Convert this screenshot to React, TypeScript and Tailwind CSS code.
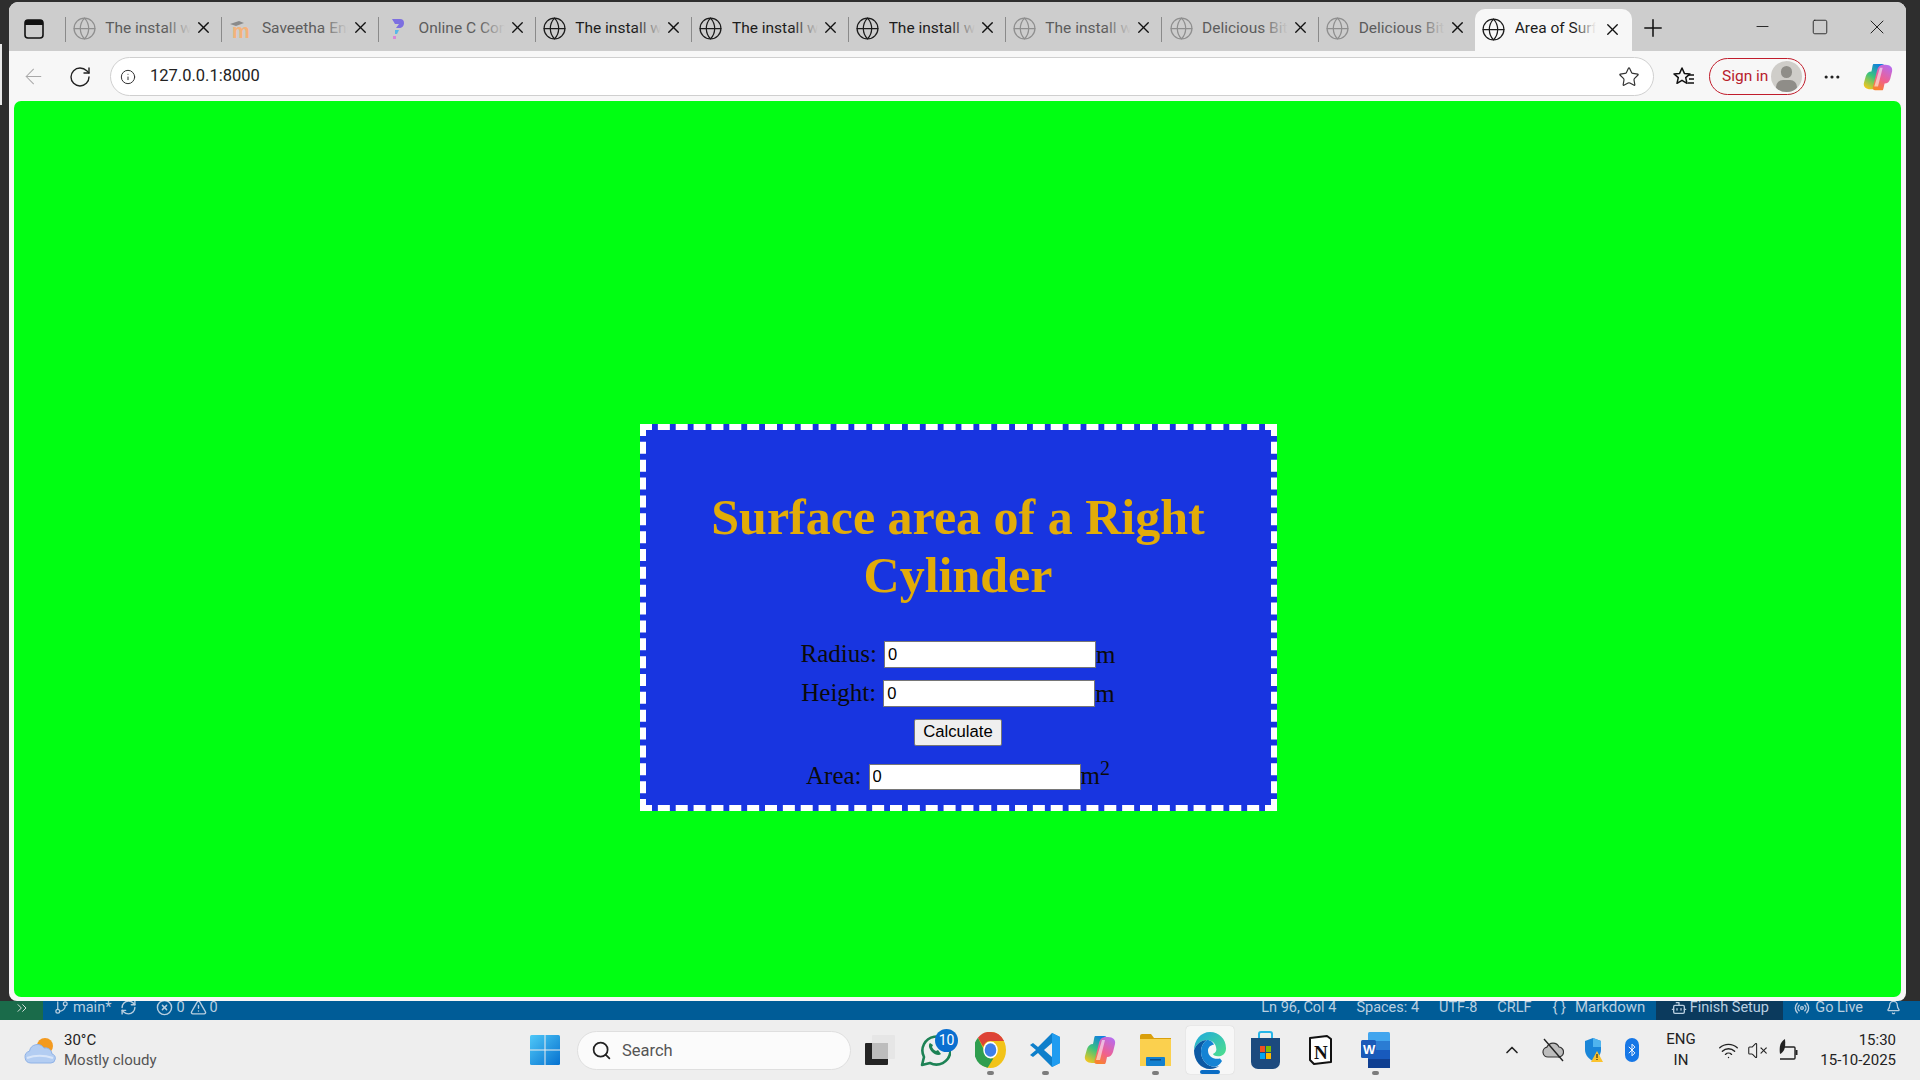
import { Bell, Bot, ChevronUp, Globe, Minus, Plus, RotateCw, Search, Square, Star, Wifi, X, ArrowLeft, Info, MoreHorizontal, VolumeX, Bluetooth, GitBranch, RefreshCw, CircleX, TriangleAlert, Radio, ChevronsRight } from "lucide-react"

const ui = "font-['Roboto',sans-serif]"

interface TabProps {
  title: string
  dim?: boolean
  icon?: "globe" | "moodle" | "compiler"
}

function Tab({ title, dim, icon = "globe" }: TabProps) {
  return (
    <div className="relative flex h-[49px] w-[156.7px] shrink-0 items-center pr-[8px] pt-[5px]">
      <div className="h-[25px] w-px bg-[#8a8a8a]" />
      <div className="-mt-[1px] flex w-[38px] shrink-0 justify-center">
        {icon === "globe" && (
          <Globe size={25} strokeWidth={1.2} className={dim ? "text-[#8f8f8f]" : "text-[#1c1c1c]"} />
        )}
        {icon === "moodle" && <MoodleIcon />}
        {icon === "compiler" && <CompilerIcon />}
      </div>
      <div className="relative -mt-[1px] ml-[2px] w-[86px] shrink-0 overflow-hidden">
        <span className={`block whitespace-nowrap text-[15.5px] ${dim ? "text-[#5c5c5c]" : "text-[#1c1c1c]"}`}>{title}</span>
        <div className="absolute inset-y-0 right-0 w-[26px] bg-gradient-to-r from-transparent to-[#cdcdcd]" />
      </div>
      <X size={19} strokeWidth={1.7} className="-mt-[3px] ml-[3px] shrink-0 text-[#111]" />
    </div>
  )
}

function MoodleIcon() {
  return (
    <svg width="24" height="20" viewBox="0 0 24 20">
      <path d="M1 5l9-3 5 2-8 3z" fill="#8a8a8a" />
      <text x="3" y="19" fontSize="20" fontFamily="Liberation Sans, sans-serif" fontWeight="700" fill="#f3b27a">m</text>
    </svg>
  )
}

function CompilerIcon() {
  return (
    <svg width="16" height="24" viewBox="0 0 16 24">
      <path d="M2 2h8a4 4 0 0 1 4 4c0 3-2 5-5 5H6l3-4H5z" fill="#7d6fe0" />
      <path d="M5 13h4l-2 4H5z" fill="#58b8e8" />
      <path d="M3 19h3v3H3z" fill="#d886d8" />
    </svg>
  )
}

function SidebarIcon() {
  return (
    <svg width="20" height="20" viewBox="0 0 20 20">
      <rect x="1" y="1" width="18" height="18" rx="3" fill="none" stroke="#111" strokeWidth="1.6" />
      <path d="M1 4a3 3 0 0 1 3-3h12a3 3 0 0 1 3 3v2H1z" fill="#111" />
    </svg>
  )
}

function FavoritesIcon() {
  return (
    <svg width="22" height="22" viewBox="0 0 22 22">
      <path d="M9 2l2.4 5.4 5.6.5-4.3 3.7 1.3 5.7L9 14.3l-5 3 1.3-5.7L1 7.9l5.6-.5z" fill="none" stroke="#111" strokeWidth="1.5" strokeLinejoin="round" />
      <path d="M15 9h6M16 13h5M15 17h6" stroke="#111" strokeWidth="1.3" />
    </svg>
  )
}

function CopilotIcon({ size }: { size: number }) {
  return (
    <svg width={size} height={size} viewBox="0 0 32 32">
      <defs>
        <linearGradient id={`cpa${size}`} x1="0.2" y1="1" x2="0.7" y2="0">
          <stop offset="0" stopColor="#f6c61e" />
          <stop offset="0.5" stopColor="#3cc47c" />
          <stop offset="1" stopColor="#0f7fe0" />
        </linearGradient>
        <linearGradient id={`cpb${size}`} x1="0.8" y1="0" x2="0.3" y2="1">
          <stop offset="0" stopColor="#b66cf0" />
          <stop offset="0.6" stopColor="#f0608f" />
          <stop offset="1" stopColor="#f9822e" />
        </linearGradient>
      </defs>
      <path d="M11 2h9c2 0 3 1 2.5 3L18 23c-1 4-3 6-7 6H8c-5 0-8-3-7-7l2-7c1-3 3-5 6-5 1-4 1-7 2-8z" fill={`url(#cpa${size})`} />
      <path d="M21 30h-8c-2 0-3-1-2.5-3L15 9c1-4 3-6 7-6h2c5 0 8 3 7 7l-2 8c-1 3-3 5-6 5-1 4-1 6-2 7z" fill={`url(#cpb${size})`} />
      <path d="M18 6h3l-5 20h-4z" fill="#fff" fillOpacity="0.55" />
    </svg>
  )
}

function WeatherIcon() {
  return (
    <svg width="32" height="27" viewBox="0 0 32 27">
      <circle cx="21" cy="9" r="8" fill="#f39a1f" />
      <path d="M7 26a6 6 0 0 1-1.5-11.8A8 8 0 0 1 20 11a6.5 6.5 0 0 1 8 6 4.6 4.6 0 0 1-1 9z" fill="#b3cdf2" stroke="#8fb2e6" strokeWidth="1" />
      <path d="M3 21c8-3 17-3 26 0" fill="none" stroke="#d9e6f9" strokeWidth="2" />
    </svg>
  )
}

function WindowsLogo() {
  return (
    <svg width="30" height="30" viewBox="0 0 30 30">
      <defs>
        <linearGradient id="win" x1="0" y1="0" x2="1" y2="1">
          <stop offset="0" stopColor="#4fc8f8" />
          <stop offset="1" stopColor="#0671cf" />
        </linearGradient>
      </defs>
      <rect width="30" height="30" rx="1.5" fill="url(#win)" />
      <path d="M14.5 0h1v30h-1zM0 14.5h30v1H0z" fill="#eee" />
    </svg>
  )
}

function TaskViewIcon() {
  return (
    <svg width="30" height="30" viewBox="0 0 30 30">
      <rect x="0" y="8" width="23" height="22" rx="1" fill="#242424" />
      <rect x="7" y="0" width="23" height="24" rx="1" fill="#e6e6e6" />
      <rect x="7" y="8" width="16" height="16" fill="#bdbdbd" />
    </svg>
  )
}

function WhatsAppIcon() {
  return (
    <svg width="32" height="34" viewBox="0 0 32 34">
      <path d="M3 32l2-8A14 14 0 1 1 11 30z" fill="#eeeeee" stroke="#1d8255" strokeWidth="2.6" strokeLinejoin="round" />
      <path d="M11 10c-2 2-1 6 2 9s7 4 9 2l-3-4-2 1c-2-1-3-2-4-4l1-2z" fill="#1d8255" />
    </svg>
  )
}

function ChromeIcon() {
  return (
    <svg width="31" height="36" viewBox="0 0 32 32" preserveAspectRatio="none">
      <circle cx="16" cy="16" r="16" fill="#f2c318" />
      <path d="M16 0a16 16 0 0 1 14 8H16a8 8 0 0 0-7.5 5L3 5A16 16 0 0 1 16 0z" fill="#dd4337" />
      <path d="M3 5l7 12a8 8 0 0 0 9 6.5L13 31.7A16 16 0 0 1 3 5z" fill="#2f9e4f" />
      <circle cx="16" cy="16" r="7.5" fill="#fff" />
      <circle cx="16" cy="16" r="6" fill="#3f7fe8" />
    </svg>
  )
}

function VsCodeIcon() {
  return (
    <svg width="32" height="36" viewBox="0 0 32 36">
      <path d="M23 1l8 4v26l-8 4L9 21l-5 4-3-2 6-5-6-5 3-2 5 4z" fill="#0e7fcb" />
      <path d="M23 1l8 4v26l-8 4z" fill="#1f9cf0" />
      <path d="M23 11l-8 7 8 7z" fill="#eeeeee" />
    </svg>
  )
}

function FolderIcon() {
  return (
    <svg width="31" height="32" viewBox="0 0 31 32">
      <path d="M0 2a2 2 0 0 1 2-2h9l3 4h17v8H0z" fill="#d99f0c" />
      <path d="M0 5h31v27H0z" fill="#fbd04e" />
      <rect x="6" y="23" width="19" height="9" rx="1" fill="#1380cf" />
      <rect x="10" y="25" width="11" height="1.5" fill="#0b4f8a" />
    </svg>
  )
}

function EdgeIcon() {
  return (
    <svg width="32" height="37" viewBox="0 0 32 32" preserveAspectRatio="none">
      <defs>
        <linearGradient id="edgea" x1="0" y1="0" x2="1" y2="1">
          <stop offset="0" stopColor="#1fa8e0" />
          <stop offset="1" stopColor="#4fe08a" />
        </linearGradient>
      </defs>
      <path d="M16 0c9 0 16 6 16 14 0 5-4 7-8 7-3 0-5-1-5-2 3-1 4-3 3-6-1-4-5-6-9-6C7 7 2 11 0 16 0 7 7 0 16 0z" fill="url(#edgea)" />
      <path d="M0 16c2-5 7-9 13-9-4 2-6 6-6 10 0 7 6 13 14 13 2 0 3 0 5-1-3 2-6 3-10 3C7 32 0 25 0 16z" fill="#0c59a4" />
      <path d="M7 17c0-4 2-8 6-10 4 0 6 2 7 4-3 0-6 2-6 5 0 5 5 8 12 7l2 2c-2 3-4 4-7 5-8 0-14-6-14-13z" fill="#1483d4" />
    </svg>
  )
}

function StoreIcon() {
  return (
    <svg width="29" height="38" viewBox="0 0 29 38">
      <path d="M8 8V3a2 2 0 0 1 2-2h9a2 2 0 0 1 2 2v5" fill="none" stroke="#27b5e8" strokeWidth="2" />
      <path d="M0 7h29v24a7 7 0 0 1-7 7H7a7 7 0 0 1-7-7z" fill="#1c4a7e" />
      <rect x="9" y="15" width="5" height="6" fill="#f05022" />
      <rect x="15" y="15" width="5" height="6" fill="#7fba00" />
      <rect x="9" y="22" width="5" height="6" fill="#00a4ef" />
      <rect x="15" y="22" width="5" height="6" fill="#ffb900" />
    </svg>
  )
}

function NotionIcon() {
  return (
    <svg width="23" height="30" viewBox="0 0 23 30">
      <path d="M1 3l17-2 4 3v23l-17 2-4-4z" fill="#fff" stroke="#111" strokeWidth="2" strokeLinejoin="round" />
      <text x="5" y="24" fontSize="19" fontFamily="Liberation Serif, serif" fontWeight="700" fill="#111">N</text>
    </svg>
  )
}

function WordIcon() {
  return (
    <svg width="29" height="36" viewBox="0 0 29 36">
      <rect x="7" y="0" width="22" height="36" rx="1.5" fill="#41a5ee" />
      <rect x="7" y="9" width="22" height="9" fill="#2b7cd3" />
      <rect x="7" y="18" width="22" height="9" fill="#185abd" />
      <rect x="7" y="27" width="22" height="9" fill="#103f91" />
      <rect x="0" y="8" width="15" height="18" rx="1.5" fill="#1a5ab8" />
      <text x="2" y="22" fontSize="13" fontFamily="Liberation Sans, sans-serif" fontWeight="700" fill="#fff">W</text>
    </svg>
  )
}

function CloudSlashIcon() {
  return (
    <svg width="22" height="24" viewBox="0 0 22 24">
      <path d="M6 19a5 5 0 0 1-1-9.9A6.5 6.5 0 0 1 17 9a5 5 0 0 1-1 10z" fill="#bdbdbd" stroke="#333" strokeWidth="1.2" />
      <path d="M2 1l19 22" stroke="#222" strokeWidth="1.4" />
    </svg>
  )
}

function ShieldIcon() {
  return (
    <svg width="20" height="26" viewBox="0 0 20 26">
      <path d="M1 4l8-3 8 3v9c0 5-4 9-8 11-4-2-8-6-8-11z" fill="#1a86d8" />
      <path d="M9 1l8 3v6H9z" fill="#4fb4ee" />
      <path d="M13 14l6 11H7z" fill="#fbc32d" />
      <path d="M12.5 17h1v4h-1zM12.5 22h1v1h-1z" fill="#111" />
    </svg>
  )
}

function BatteryIcon() {
  return (
    <svg width="21" height="22" viewBox="0 0 21 22">
      <path d="M3 8h14a1 1 0 0 1 1 1v10a1 1 0 0 1-1 1H3" fill="none" stroke="#222" strokeWidth="1.4" />
      <rect x="18.5" y="11" width="2" height="5" fill="#222" />
      <path d="M8 0C3 3 2 8 3 15c4-2 6-6 5-15z" fill="#222" />
    </svg>
  )
}

function TaskbarApp({ children, running, active }: { children: React.ReactNode; running?: boolean; active?: boolean }) {
  return (
    <div className={`relative flex h-[48px] w-[48px] items-center justify-center rounded-[4px] ${active ? "bg-[#f7f7f7] shadow-[0_0_1px_#bbb]" : ""}`}>
      {children}
      {running && !active && <div className="absolute bottom-[-1px] h-[4px] w-[7px] rounded-full bg-[#7c7c7c]" />}
      {active && <div className="absolute bottom-[0px] h-[4px] w-[20px] rounded-full bg-[#0a6cc4]" />}
    </div>
  )
}

export default function App() {
  return (
    <div className={`relative flex h-screen w-full flex-col overflow-hidden bg-[#2e2e2e] ${ui}`}>
      <div className="absolute left-0 top-[44px] h-[61px] w-[2px] bg-[#e8e8e8]" />
      <div className="flex min-h-0 flex-1 pl-[9px] pr-[14px] pt-[2px]">
        <div className="flex w-full flex-col overflow-hidden rounded-t-[9px] rounded-b-[8px] bg-[#f7f7f7]">
          {/* tab strip */}
          <div className="flex h-[49px] shrink-0 items-end bg-[#cdcdcd]">
            <div className="flex h-[49px] w-[55.5px] shrink-0 items-center justify-center pr-[5px] pt-[5px]">
              <SidebarIcon />
            </div>
            <Tab title="The install was" dim />
            <Tab title="Saveetha Engineering" dim icon="moodle" />
            <Tab title="Online C Compiler" dim icon="compiler" />
            <Tab title="The install was" />
            <Tab title="The install was" />
            <Tab title="The install was" />
            <Tab title="The install was" dim />
            <Tab title="Delicious Bites" dim />
            <Tab title="Delicious Bites" dim />
            <div className="flex h-[42px] w-[157px] shrink-0 items-center rounded-t-[10px] bg-[#f7f7f7] pb-[2px] pl-[6px]">
              <Globe size={25} strokeWidth={1.2} className="text-[#1c1c1c]" />
              <div className="relative ml-[9px] w-[81px] overflow-hidden">
                <span className="block whitespace-nowrap text-[15.5px] text-[#1c1c1c]">Area of Surface</span>
                <div className="absolute inset-y-0 right-0 w-[22px] bg-gradient-to-r from-transparent to-[#f7f7f7]" />
              </div>
              <X size={19} strokeWidth={1.7} className="ml-[7px] text-[#111]" />
            </div>
            <div className="flex h-[49px] flex-1 items-center pt-[5px]">
              <Plus size={28} strokeWidth={1.3} className="-mt-[3px] ml-[7px] text-[#111]" />
              <div className="ml-auto flex h-full items-center pb-[5px] pr-[17px] text-[#222]">
                <Minus size={19} strokeWidth={1.2} />
                <Square size={18} strokeWidth={1.2} className="ml-[39px]" />
                <X size={24} strokeWidth={1} className="ml-[36px]" />
              </div>
            </div>
          </div>
          {/* address bar */}
          <div className="flex h-[50px] shrink-0 items-center pb-[1px] pt-[2px]">
            <ArrowLeft size={25} strokeWidth={1} className="ml-[12px] text-[#a9a9a9]" />
            <RotateCw size={24} strokeWidth={1.4} className="ml-[22px] text-[#222]" />
            <div className="ml-[18px] flex h-[39px] w-[1544px] items-center rounded-full border border-[#cfcfcf] bg-white pl-[9px] pr-[13px]">
              <Info size={16} strokeWidth={1.5} className="text-[#333]" />
              <span className="ml-[14px] text-[16.5px] text-[#222]">127.0.0.1:8000</span>
              <Star size={22} strokeWidth={1.3} className="ml-auto text-[#333]" />
            </div>
            <div className="ml-[19px]">
              <FavoritesIcon />
            </div>
            <div className="ml-[14px] flex h-[37px] w-[97px] items-center rounded-full border border-[#c01c2b] pl-[12px] pr-[3px]">
              <span className="text-[15.5px] text-[#b8202c]">Sign in</span>
              <div className="relative ml-auto h-[31px] w-[31px] overflow-hidden rounded-full bg-[#cfcdc9]">
                <div className="mx-auto mt-[5px] h-[12px] w-[11px] rounded-full bg-[#8f8d88]" />
                <div className="mx-auto mt-[2px] h-[14px] w-[21px] rounded-full bg-[#8f8d88]" />
              </div>
            </div>
            <MoreHorizontal size={20} strokeWidth={1.8} className="ml-[16px] text-[#222]" />
            <div className="ml-[21px]">
              <CopilotIcon size={30} />
            </div>
          </div>
          {/* page */}
          <div className="mx-[5px] mb-[4px] flex min-h-0 flex-1 justify-center rounded-[7px] bg-[#00ff12] pl-[1px] pt-[323px]">
            <div className="h-[387px] w-[637px] border-[6px] border-dashed border-white bg-[#1835e0] text-center font-['Liberation_Serif',serif] text-[25px] leading-[29px] text-[#0b0b0b]">
              <h1 className="mx-auto mt-[58px] w-[520px] text-[50px] font-bold leading-[58px] text-[#e2ac08]">
                Surface area of a Right Cylinder
              </h1>
              <div className="mt-[36px] flex h-[29px] items-center justify-center">
                <span className="-mt-[3px]">Radius:</span>
                <input readOnly value="0" className="ml-[7px] h-[27px] w-[212px] border border-[#767676] bg-white px-[3px] font-['Liberation_Sans',sans-serif] text-[16.5px] text-black" />
                <span className="-mt-[1px]">m</span>
              </div>
              <div className="mt-[10px] flex h-[29px] items-center justify-center">
                <span className="-mt-[3px]">Height:</span>
                <input readOnly value="0" className="ml-[7px] h-[27px] w-[212px] border border-[#767676] bg-white px-[3px] font-['Liberation_Sans',sans-serif] text-[16.5px] text-black" />
                <span className="-mt-[1px]">m</span>
              </div>
              <button className="mt-[11px] h-[27px] w-[88px] rounded-[2px] border border-[#767676] bg-[#efefef] font-['Liberation_Sans',sans-serif] text-[16.7px] leading-none text-black">
                Calculate
              </button>
              <div className="mt-[16px] flex h-[29px] items-center justify-center">
                <span className="-mt-[3px]">Area:</span>
                <input readOnly value="0" className="ml-[7px] h-[26px] w-[212px] border border-[#767676] bg-white px-[3px] font-['Liberation_Sans',sans-serif] text-[16.5px] text-black" />
                <span className="-mt-[3px]">
                  m<sup className="top-[-9px] align-baseline text-[20px]">2</sup>
                </span>
              </div>
            </div>
          </div>
        </div>
      </div>
      {/* vs code status bar */}
      <div className="flex h-[19px] shrink-0 items-center overflow-hidden bg-[#005c97] pb-[6px] text-[14.5px] text-[#b9cfe0]">
        <div className="-mb-[6px] flex h-[19px] w-[43px] items-center justify-center bg-[#1a6b4a] pb-[6px] text-[#d4e0da]">
          <ChevronsRight size={16} strokeWidth={1.5} />
        </div>
        <GitBranch size={15} className="ml-[11px]" />
        <span className="ml-[4px]">main*</span>
        <RefreshCw size={17} className="ml-[9px]" />
        <CircleX size={17} className="ml-[19px]" />
        <span className="ml-[3px]">0</span>
        <TriangleAlert size={17} className="ml-[5px]" />
        <span className="ml-[3px]">0</span>
        <span className="ml-auto">Ln 96, Col 4</span>
        <span className="ml-[20px]">Spaces: 4</span>
        <span className="ml-[20px]">UTF-8</span>
        <span className="ml-[20px]">CRLF</span>
        <span className="ml-[21px]">{"{ }"}</span>
        <span className="ml-[9px] text-[15px]">Markdown</span>
        <div className="-mb-[6px] ml-[11px] flex h-[19px] w-[127px] items-center justify-center gap-[3px] bg-[#0b3a5d] pb-[6px]">
          <Bot size={16} />
          <span>Finish Setup</span>
        </div>
        <Radio size={16} className="ml-[11px]" />
        <span className="ml-[5px]">Go Live</span>
        <Bell size={15} className="ml-[23px] mr-[19px]" />
      </div>
      {/* windows taskbar */}
      <div className="flex h-[60px] shrink-0 items-center bg-[#eeeeee] text-[#222]">
        <div className="ml-[24px] flex w-[506px] items-center">
          <WeatherIcon />
          <div className="ml-[8px] flex flex-col text-[15px] leading-[20px]">
            <span className="text-[#222]">30°C</span>
            <span className="text-[#555]">Mostly cloudy</span>
          </div>
        </div>
        <WindowsLogo />
        <div className="ml-[17px] flex h-[39px] w-[274px] items-center rounded-full border border-[#dfdfdf] bg-[#fbfbfb] pl-[13px]">
          <Search size={21} strokeWidth={2} className="text-[#222]" />
          <span className="ml-[10px] mt-[2px] text-[16.5px] text-[#555]">Search</span>
        </div>
        <div className="ml-[14px]">
          <TaskViewIcon />
        </div>
        <div className="ml-[16px] flex items-center gap-[7px]">
          <TaskbarApp>
            <WhatsAppIcon />
            <div className="absolute right-[1px] top-[3px] flex h-[23px] w-[23px] items-center justify-center rounded-full bg-[#0a6fd0] text-[14px] text-white">10</div>
          </TaskbarApp>
          <TaskbarApp running><ChromeIcon /></TaskbarApp>
          <TaskbarApp running><VsCodeIcon /></TaskbarApp>
          <TaskbarApp><CopilotIcon size={32} /></TaskbarApp>
          <TaskbarApp running><FolderIcon /></TaskbarApp>
          <TaskbarApp active><EdgeIcon /></TaskbarApp>
          <TaskbarApp><StoreIcon /></TaskbarApp>
          <TaskbarApp><NotionIcon /></TaskbarApp>
          <TaskbarApp running><WordIcon /></TaskbarApp>
        </div>
        <ChevronUp size={20} strokeWidth={2} className="ml-[103px] text-[#222]" />
        <div className="ml-[20px]"><CloudSlashIcon /></div>
        <div className="ml-[20px]"><ShieldIcon /></div>
        <div className="ml-[21px] flex h-[24px] w-[14px] items-center justify-center rounded-full bg-[#1677e6]">
          <Bluetooth size={14} strokeWidth={1.6} className="text-white" />
        </div>
        <div className="ml-[26px] flex w-[32px] flex-col items-center text-[15px] leading-[21px]">
          <span>ENG</span>
          <span>IN</span>
        </div>
        <Wifi size={21} strokeWidth={1.6} className="ml-[21px]" />
        <VolumeX size={21} strokeWidth={1.2} className="ml-[8px]" />
        <div className="ml-[9px]"><BatteryIcon /></div>
        <div className="ml-auto mr-[24px] flex flex-col items-end text-[15px] leading-[20px]">
          <span>15:30</span>
          <span>15-10-2025</span>
        </div>
      </div>
    </div>
  )
}
